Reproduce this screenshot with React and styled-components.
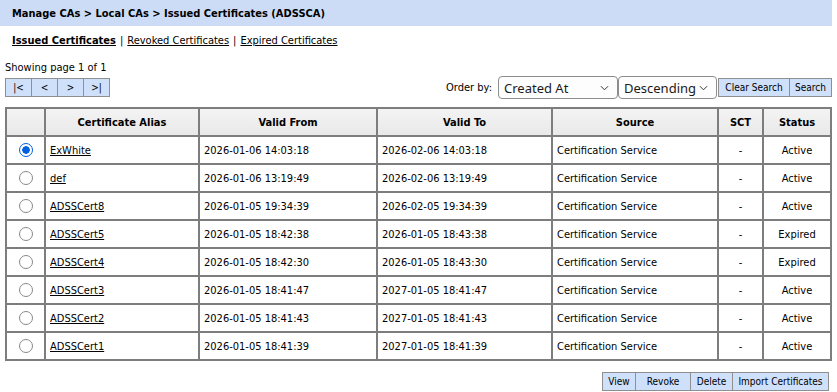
import React, { useState } from 'react'
import styled, { createGlobalStyle } from 'styled-components'

const GlobalStyle = createGlobalStyle`
  body {
    margin: 0;
    background: #fff;
    font-family: "DejaVu Sans Condensed", "Liberation Sans", sans-serif;
    font-size: 11px;
    color: #000;
  }
`

const certs = [
  { alias: 'ExWhite', from: '2026-01-06 14:03:18', to: '2026-02-06 14:03:18', status: 'Active' },
  { alias: 'def', from: '2026-01-06 13:19:49', to: '2026-02-06 13:19:49', status: 'Active' },
  { alias: 'ADSSCert8', from: '2026-01-05 19:34:39', to: '2026-02-05 19:34:39', status: 'Active' },
  { alias: 'ADSSCert5', from: '2026-01-05 18:42:38', to: '2026-01-05 18:43:38', status: 'Expired' },
  { alias: 'ADSSCert4', from: '2026-01-05 18:42:30', to: '2026-01-05 18:43:30', status: 'Expired' },
  { alias: 'ADSSCert3', from: '2026-01-05 18:41:47', to: '2027-01-05 18:41:47', status: 'Active' },
  { alias: 'ADSSCert2', from: '2026-01-05 18:41:43', to: '2027-01-05 18:41:43', status: 'Active' },
  { alias: 'ADSSCert1', from: '2026-01-05 18:41:39', to: '2027-01-05 18:41:39', status: 'Active' },
]

function App() {
  const [selected, setSelected] = useState(0)

  return (
    <Page>
      <GlobalStyle />
      <TitleBar>Manage CAs &gt; Local CAs &gt; Issued Certificates (ADSSCA)</TitleBar>
      <Tabs>
        <TabLink $active>Issued Certificates</TabLink>
        <Sep>|</Sep>
        <TabLink>Revoked Certificates</TabLink>
        <Sep>|</Sep>
        <TabLink>Expired Certificates</TabLink>
      </Tabs>

      <Toolbar>
        <Paging>
          <PageInfo>Showing page 1 of 1</PageInfo>
          <ButtonGroup>
            <Button $w={27}>|&lt;</Button>
            <Button $w={27}>&lt;</Button>
            <Button $w={27}>&gt;</Button>
            <Button $w={27}>&gt;|</Button>
          </ButtonGroup>
        </Paging>
        <Controls>
          <Label>Order by:</Label>
          <SelectWrap $w={120}>
            <Select defaultValue="created">
              <option value="created">Created At</option>
            </Select>
            <Chevron />
          </SelectWrap>
          <SelectWrap $w={99} $gap={1}>
            <Select defaultValue="desc">
              <option value="desc">Descending</option>
            </Select>
            <Chevron />
          </SelectWrap>
          <ButtonGroup>
            <Button $w={72}>Clear Search</Button>
            <Button $w={43}>Search</Button>
          </ButtonGroup>
        </Controls>
      </Toolbar>

      <Table>
        <colgroup>
          <col style={{ width: 39 }} />
          <col style={{ width: 154 }} />
          <col style={{ width: 178 }} />
          <col style={{ width: 175 }} />
          <col style={{ width: 166 }} />
          <col style={{ width: 45 }} />
          <col />
        </colgroup>
        <thead>
          <tr>
            <Th />
            <Th>Certificate Alias</Th>
            <Th>Valid From</Th>
            <Th>Valid To</Th>
            <Th>Source</Th>
            <Th>SCT</Th>
            <Th>Status</Th>
          </tr>
        </thead>
        <tbody>
          {certs.map((c, i) => (
            <tr key={c.alias}>
              <Td $center>
                <Radio $checked={selected === i} onClick={() => setSelected(i)} />
              </Td>
              <Td><AliasLink>{c.alias}</AliasLink></Td>
              <Td>{c.from}</Td>
              <Td>{c.to}</Td>
              <Td>Certification Service</Td>
              <Td $center>-</Td>
              <Td $center>{c.status}</Td>
            </tr>
          ))}
        </tbody>
      </Table>

      <Footer>
        <ButtonGroup>
          <Button $w={34}>View</Button>
          <Button $w={56}>Revoke</Button>
          <Button $w={43}>Delete</Button>
          <Button $w={97}>Import Certificates</Button>
        </ButtonGroup>
      </Footer>
    </Page>
  )
}

function Chevron() {
  return (
    <ChevronIcon viewBox="0 0 10 6" width="9" height="6">
      <path d="M1 1 L5 5 L9 1" fill="none" stroke="#333" strokeWidth="1.1" />
    </ChevronIcon>
  )
}

const Page = styled.div`
  width: 832px;
`

const TitleBar = styled.div`
  height: 26px;
  line-height: 28px;
  padding-left: 12px;
  background: #cddcf6;
  font-weight: bold;
  font-size: 11px;
`

const Tabs = styled.div`
  display: flex;
  align-items: center;
  gap: 4px;
  height: 28px;
  padding-left: 12px;
  font-size: 11px;
`

const TabLink = styled.a`
  color: #000;
  text-decoration: underline;
  font-weight: ${p => (p.$active ? 'bold' : 'normal')};
  cursor: pointer;
`

const Sep = styled.span`
  color: #000;
`

const Toolbar = styled.div`
  display: flex;
  justify-content: space-between;
  align-items: flex-end;
  margin-top: 7px;
  padding-left: 5px;
`

const Paging = styled.div`
  display: flex;
  flex-direction: column;
  gap: 3px;
  padding-bottom: 2px;
`

const PageInfo = styled.div`
  font-size: 11px;
  line-height: 14px;
`

const ButtonGroup = styled.div`
  display: flex;
`

const Button = styled.button`
  width: ${p => p.$w}px;
  height: 19px;
  padding: 0;
  margin: 0 0 0 -1px;
  border: 1px solid #8f8f8f;
  background: #cfe0fb;
  font-family: inherit;
  font-size: 10px;
  color: #000;
  cursor: pointer;
  &:first-child {
    margin-left: 0;
  }
`

const Controls = styled.div`
  display: flex;
  align-items: center;
`

const Label = styled.span`
  font-size: 11px;
  margin-right: 6px;
`

const SelectWrap = styled.div`
  position: relative;
  width: ${p => p.$w}px;
  height: 23px;
  margin-right: ${p => p.$gap || 0}px;
`

const Select = styled.select`
  appearance: none;
  width: 100%;
  height: 100%;
  padding: 0 0 0 5px;
  border: 1px solid #8d8d8d;
  border-radius: 4px;
  background: #fdfdfd;
  font-family: "Noto Sans", "Open Sans", sans-serif;
  font-size: 13px;
  color: #1a1a1a;
`

const ChevronIcon = styled.svg`
  position: absolute;
  right: 9px;
  top: 9px;
  pointer-events: none;
`

const Table = styled.table`
  margin: 8px 0 0 5px;
  width: 827px;
  table-layout: fixed;
  border-collapse: separate;
  border-spacing: 0;
  border: 1px solid #7d7d7d;
`

const Th = styled.th`
  height: 26px;
  padding: 0;
  border: 1px solid #7d7d7d;
  background: linear-gradient(#f3f3f3, #e9e9e9);
  font-size: 11px;
  font-weight: bold;
  text-align: center;
`

const Td = styled.td`
  height: 26px;
  padding: 0 0 0 4px;
  border: 1px solid #7d7d7d;
  font-size: 11px;
  text-align: ${p => (p.$center ? 'center' : 'left')};
  white-space: nowrap;
  ${p => p.$center && 'padding: 0;'}
`

const AliasLink = styled.a`
  color: #000;
  text-decoration: underline;
  cursor: pointer;
`

const Radio = styled.span`
  display: inline-block;
  vertical-align: middle;
  box-sizing: border-box;
  width: 14px;
  height: 14px;
  border-radius: 50%;
  border: 1px solid ${p => (p.$checked ? '#0060df' : '#8a8a8a')};
  background: ${p =>
    p.$checked
      ? 'radial-gradient(circle, #0060df 0 3.5px, #fff 4px)'
      : '#fff'};
  cursor: pointer;
`

const Footer = styled.div`
  display: flex;
  justify-content: flex-end;
  margin-top: 11px;
  padding-right: 3px;
`

export default App
